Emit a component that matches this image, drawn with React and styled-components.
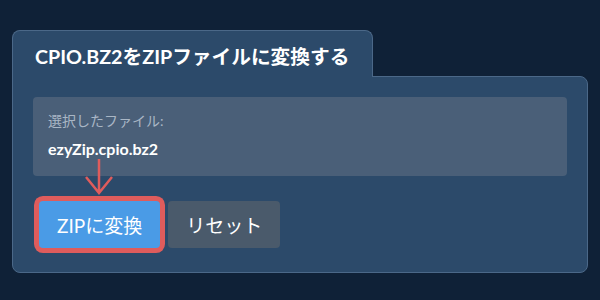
import React from "react";
import styled, { createGlobalStyle } from "styled-components";

const Global = createGlobalStyle`
  html, body {
    margin: 0;
    background: #0f2137;
  }
  body {
    font-family: "Lato", "Noto Sans CJK JP", sans-serif;
    color: #ffffff;
  }
`;

const Page = styled.div`
  width: 600px;
  height: 300px;
  box-sizing: border-box;
  padding: 30px 12px 0;
`;

const Tab = styled.div`
  position: relative;
  z-index: 1;
  display: inline-flex;
  align-items: center;
  box-sizing: border-box;
  width: 361px;
  height: 47px;
  margin-bottom: -1px;
  padding: 6px 22px 0;
  background: #2c4a6a;
  border: 1px solid #4b6888;
  border-bottom: none;
  border-radius: 8px 8px 0 0;
`;

const Title = styled.h1`
  margin: 0;
  font-size: 19.7px;
  font-weight: 700;
  line-height: 1;
  white-space: nowrap;
`;

const Panel = styled.div`
  position: relative;
  box-sizing: border-box;
  height: 197px;
  padding: 20px 20px 24px;
  background: #2c4a6a;
  border: 1px solid #4b6888;
  border-radius: 0 8px 8px 8px;
`;

const FileBox = styled.div`
  box-sizing: border-box;
  height: 79px;
  padding: 15px 15px 0;
  background: #4a5f78;
  border-radius: 4px;
`;

const Label = styled.div`
  font-size: 14px;
  line-height: 18px;
  color: #a9b6c5;
`;

const FileName = styled.div`
  margin-top: 9px;
  font-size: 16px;
  line-height: 20px;
  font-weight: 700;
`;

const Actions = styled.div`
  display: flex;
  gap: 8px;
  margin-top: 25px;
  padding-left: 6px;
`;

const Button = styled.button`
  height: 47px;
  padding: 0 18px;
  border: none;
  border-radius: 4px;
  font-family: "Lato", "Noto Sans CJK JP", sans-serif;
  font-size: 19px;
  color: #ffffff;
  background: ${(p) => (p.$primary ? "#4a9be6" : "#4a5a6b")};
  box-shadow: ${(p) => (p.$highlight ? "0 0 0 5px #df5c5c" : "none")};
  cursor: pointer;
`;

const Arrow = styled.svg`
  position: absolute;
  left: 72px;
  top: 81px;
`;

export default function App() {
  return (
    <Page>
      <Global />
      <Tab>
        <Title>CPIO.BZ2をZIPファイルに変換する</Title>
      </Tab>
      <Panel>
        <FileBox>
          <Label>選択したファイル:</Label>
          <FileName>ezyZip.cpio.bz2</FileName>
        </FileBox>
        <Actions>
          <Button $primary $highlight>ZIPに変換</Button>
          <Button>リセット</Button>
        </Actions>
        <Arrow width="28" height="37" viewBox="0 0 28 37">
          <path
            d="M14 1 V35 M1 19 L14 35 L27 19"
            fill="none"
            stroke="#df5c5c"
            strokeWidth="2.5"
          />
        </Arrow>
      </Panel>
    </Page>
  );
}
